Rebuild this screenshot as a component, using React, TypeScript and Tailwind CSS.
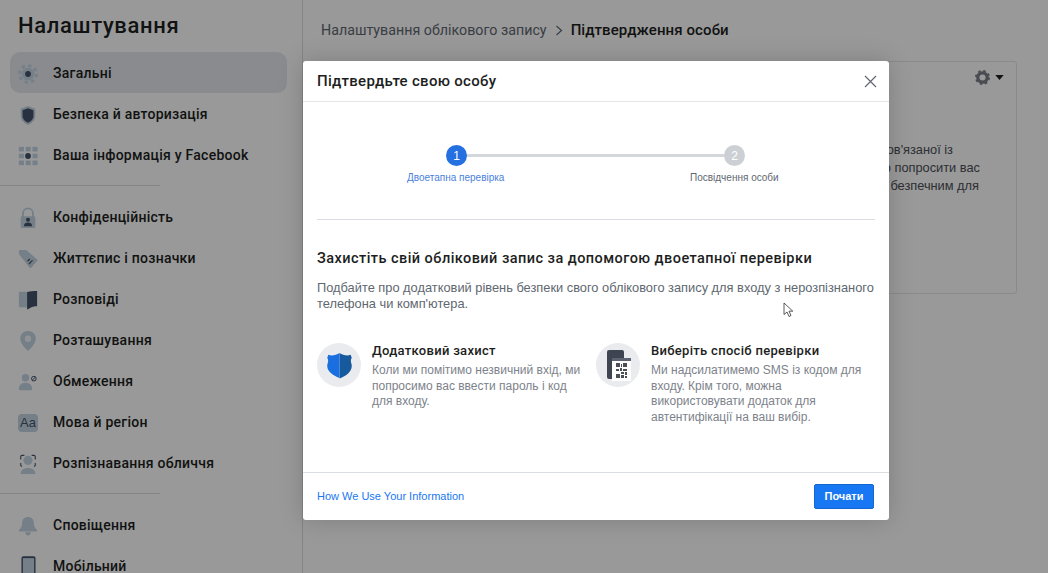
import React from "react";

const light = "#c3d4e2";
const dark = "#44536a";

const GearIcon = () => (
  <svg width="20" height="20" viewBox="0 0 22 22">
    <circle cx="11" cy="11" r="9.200" fill="none" stroke={light} strokeWidth="3.200" strokeDasharray="3.600 3.620" />
    <circle cx="11" cy="11" r="7" fill={light} />
    <circle cx="11" cy="11" r="3.200" fill={dark} />
  </svg>
);
const ShieldIcon = () => (
  <svg width="20" height="20" viewBox="0 0 22 22">
    <path d="M11 1l8 3v8c0 5-4 8-8 10-4-2-8-5-8-10V4z" fill={light} />
    <path d="M11 3.5l6 2.2V12c0 3.6-3 6-6 7.6C8 18 5 15.600 5 12V5.700z" fill={dark} />
  </svg>
);
const GridIcon = () => (
  <svg width="20" height="20" viewBox="0 0 22 22" fill={light}>
    <rect x="1" y="1" width="5.500" height="5" />
    <rect x="8.500" y="1" width="5.500" height="5" />
    <rect x="16" y="1" width="5.500" height="5" />
    <rect x="1" y="8.500" width="5.500" height="5" />
    <rect x="16" y="8.500" width="5.500" height="5" />
    <rect x="1" y="16" width="5.500" height="5" />
    <rect x="8.500" y="16" width="5.500" height="5" />
    <rect x="16" y="16" width="5.500" height="5" />
    <circle cx="11" cy="11" r="3.200" fill={dark} />
  </svg>
);
const LockIcon = () => (
  <svg width="20" height="22" viewBox="0 0 22 24">
    <path d="M5.500 12V7a5.500 5.500 0 0111 0v5" fill="none" stroke={light} strokeWidth="2" />
    <rect x="3" y="10" width="16" height="13" rx="1.500" fill={light} />
    <circle cx="11" cy="14" r="2.200" fill={dark} />
    <path d="M6.500 21c0-3 2-4 4.500-4s4.500 1 4.500 4z" fill={dark} />
  </svg>
);
const TagIcon = () => (
  <svg width="20" height="20" viewBox="0 0 22 22">
    <path d="M1 5.500V2.500C1 1.600 1.700 1 2.500 1H9l12 10.500c.5.500.5 1.100 0 1.700l-6.500 7.300c-.5.500-1.200.6-1.700.1z" fill={light} />
    <path d="M10.500 13.500l2.500-2.500M12 16.500l4-4" stroke={dark} strokeWidth="1.300" />
  </svg>
);
const BookIcon = () => (
  <svg width="20" height="20" viewBox="0 0 22 22">
    <path d="M1 2h10v17H1z" fill={light} />
    <path d="M10 2.500C13 1 17 1 21 1v17c-3 0-6 .5-8 2l-3 1.500z" fill={dark} />
  </svg>
);
const PinIcon = () => (
  <svg width="20" height="22" viewBox="0 0 22 24">
    <path d="M11 1c5 0 8.500 3.500 8.500 8.500 0 5-5 10-8.500 13.500-3.500-3.500-8.500-8.500-8.500-13.500C2.500 4.500 6 1 11 1z" fill={light} />
    <circle cx="11" cy="9.500" r="3.500" fill="#f0f5f9" />
  </svg>
);
const BlockedIcon = () => (
  <svg width="22" height="20" viewBox="0 0 24 22">
    <circle cx="9" cy="6" r="4.500" fill={light} />
    <path d="M1 20c0-5 3-8 8-8s8 3 8 8c0 .6-.4 1-1 1H2c-.6 0-1-.4-1-1z" fill={light} />
    <circle cx="19" cy="7" r="2.800" fill="none" stroke={dark} strokeWidth="1.200" />
    <path d="M17 9l4-4" stroke={dark} strokeWidth="1.200" />
  </svg>
);
const LangIcon = () => (
  <div className="w-[20px] h-[18px] shrink-0 rounded-[4px] bg-[#c3d4e2] flex items-center justify-center text-[13px] text-[#44536a] font-['Liberation_Sans',sans-serif]">
    Aa
  </div>
);
const FaceIcon = () => (
  <svg width="20" height="22" viewBox="0 0 22 24">
    <path d="M3 7V4c0-1 .5-1.500 1.500-1.500H7M15 2.500h2.500C18.500 2.500 19 3 19 4v3M3 11v2c0 1 .5 1.500 1.500 1.500M19 11v2c0 1-.5 1.500-1.500 1.500" fill="none" stroke={dark} strokeWidth="1.200" />
    <circle cx="11" cy="8" r="5" fill={light} />
    <path d="M3 23c0-4 3-6.500 8-6.500s8 2.500 8 6.500z" fill={light} />
  </svg>
);
const BellIcon = () => (
  <svg width="20" height="20" viewBox="0 0 22 22">
    <path d="M11 1c4 0 6.500 3 6.500 7 0 4 1.500 5.500 3.500 7.500.5.800 0 1.500-1 1.500H2c-1 0-1.500-.7-1-1.500 2-2 3.500-3.500 3.500-7.500 0-4 2.500-7 6.500-7z" fill={light} />
    <path d="M8 18h6c0 2-1.300 3.500-3 3.500S8 20 8 18z" fill={light} />
  </svg>
);
const PhoneIcon = () => (
  <svg width="15" height="24" viewBox="0 0 16 24">
    <rect x="0.500" y="0.500" width="15" height="23" rx="2" fill={dark} />
    <rect x="2" y="2.500" width="12" height="18" fill={light} />
  </svg>
);

const groups = [
  [
    { label: "Загальні", icon: <GearIcon />, active: true },
    { label: "Безпека й авторизація", icon: <ShieldIcon /> },
    { label: "Ваша інформація у Facebook", icon: <GridIcon /> },
  ],
  [
    { label: "Конфіденційність", icon: <LockIcon /> },
    { label: "Життєпис і позначки", icon: <TagIcon /> },
    { label: "Розповіді", icon: <BookIcon /> },
    { label: "Розташування", icon: <PinIcon /> },
    { label: "Обмеження", icon: <BlockedIcon /> },
    { label: "Мова й регіон", icon: <LangIcon /> },
    { label: "Розпізнавання обличчя", icon: <FaceIcon /> },
  ],
  [
    { label: "Сповіщення", icon: <BellIcon /> },
    { label: "Мобільний", icon: <PhoneIcon /> },
  ],
];

const Sidebar = () => (
  <aside className="w-[303px] shrink-0 h-full border-r border-[#dcdcdc] bg-white overflow-hidden">
    <h1 className="pl-[18px] pt-[12px] h-[52px] text-[22px] leading-[28px] font-medium tracking-[0.65px] text-[#1c1e21] font-['Roboto',sans-serif]">
      Налаштування
    </h1>
    {groups.map((group, i) => (
      <div key={i}>
        {i > 0 && <div className="w-[160px] h-px bg-[#dadde1] mt-[10px] mb-[10px]" />}
        {group.map((item) => (
          <div
            key={item.label}
            className={`ml-[10px] mr-[15px] h-[41px] pt-[2px] rounded-[10px] flex items-center ${item.active ? "bg-[#e4e8ee]" : ""}`}
          >
            <div className="ml-[8px] w-[20px] flex items-center justify-center shrink-0">{item.icon}</div>
            <span className="ml-[15px] text-[14px] font-medium tracking-[0.25px] text-[#1c1e21] font-['Roboto',sans-serif]">{item.label}</span>
          </div>
        ))}
      </div>
    ))}
  </aside>
);

const Background = () => (
  <main className="flex-1 h-full bg-white pl-[18px] pr-[31px]">
    <div className="h-[61px] pt-[20px] flex items-start text-[15px] leading-[20px] font-['Roboto',sans-serif]">
      <span className="text-[#606770] text-[14.250px]">Налаштування облікового запису</span>
      <svg className="mx-[8px] mt-[5px]" width="8" height="11" viewBox="0 0 8 11">
        <path d="M1.500 1l5 4.500-5 4.500" fill="none" stroke="#606770" strokeWidth="1.200" />
      </svg>
      <span className="font-medium tracking-[0.1px] text-[#1c1e21]">Підтвердження особи</span>
    </div>
    <div className="h-[233px] rounded-[3px] border border-[#e6e6e6] flex flex-col items-end text-[12.800px] leading-[18px] text-[#4b4f56]">
      <div className="h-[28px] flex items-center mr-[12px] gap-[5px] mt-[1px]">
        <svg width="15" height="15" viewBox="0 0 16 16">
          <circle cx="8" cy="8" r="5" fill="none" stroke="#7a8088" strokeWidth="3.500" />
          <circle cx="8" cy="8" r="6.800" fill="none" stroke="#7a8088" strokeWidth="2.400" strokeDasharray="2.600 2.740" />
        </svg>
        <svg width="9" height="5" viewBox="0 0 10 6">
          <path d="M0 0h10L5 6z" fill="#1c1e21" />
        </svg>
      </div>
      <div className="mt-[50px] mr-[63px]">пов'язаної із</div>
      <div className="mr-[36px]">можемо попросити вас</div>
      <div className="mr-[37px]">безпечним для</div>
    </div>
  </main>
);

const ShieldBadge = () => (
  <div className="w-[44px] h-[44px] rounded-full bg-[#e9ebee] flex items-center justify-center shrink-0">
    <svg width="29" height="27" viewBox="0 0 26 26" preserveAspectRatio="none">
      <path d="M13 1c2 1.500 4.500 2.300 7 2.300 1 0 2-.2 3-.6l1 3c-.8 1-.8 2-.8 3.300 0 1 .8 2.500.8 4.500 0 5.500-5 9.500-11 12z" fill="#17599d" />
      <path d="M13 1C11 2.500 8.500 3.300 6 3.300c-1 0-2-.2-3-.6l-1 3c.8 1 .8 2 .8 3.300 0 1-.8 2.500-.8 4.500C2 18.500 7 22.500 13 25z" fill="#1a6fe0" />
    </svg>
  </div>
);

const PhoneBadge = () => (
  <div className="w-[44px] h-[44px] rounded-full bg-[#e9ebee] flex items-center justify-center shrink-0">
    <svg width="26" height="32" viewBox="0 0 26 32">
      <rect x="2" y="1" width="17" height="29" rx="2" fill="#3e4550" />
      <rect x="7" y="9" width="19" height="23" fill="#ffffff" />
      <rect x="7" y="9" width="19" height="3" fill="#5b6470" />
      <g fill="#4b4f56">
        <rect x="11" y="14" width="4" height="4" />
        <rect x="18" y="14" width="4" height="4" />
        <rect x="11" y="25" width="4" height="4" />
        <rect x="16" y="15" width="1" height="3" />
        <rect x="11" y="20" width="3" height="2" />
        <rect x="15" y="19" width="2" height="3" />
        <rect x="18" y="20" width="4" height="2" />
        <rect x="16" y="23" width="3" height="2" />
        <rect x="20" y="23" width="2" height="3" />
        <rect x="16" y="26" width="3" height="3" />
        <rect x="20" y="27" width="2" height="2" />
      </g>
    </svg>
  </div>
);

const Feature = ({ badge, title, lines, className }: { badge: React.ReactNode; title: string; lines: string[]; className: string }) => (
  <div className={`flex gap-[11px] ${className}`}>
    {badge}
    <div>
      <div className="text-[13px] leading-[16px] font-medium tracking-[0.3px] text-[#1c1e21] font-['Roboto',sans-serif]">{title}</div>
      <div className="mt-[4px] text-[12px] leading-[15.500px] text-[#7d828b] whitespace-nowrap">
        {lines.map((l) => (
          <div key={l}>{l}</div>
        ))}
      </div>
    </div>
  </div>
);

const Modal = () => (
  <div className="absolute left-[303px] top-[61px] w-[586px] h-[459px] bg-white rounded-[3px] flex flex-col shadow-[0_0_24px_rgba(0,0,0,0.18)]">
    <div className="h-[41px] shrink-0 border-b border-[#e5e5e5] flex items-center justify-between pl-[14px] pr-[12px]">
      <span className="text-[15px] font-medium tracking-[0.3px] text-[#1c1e21] font-['Roboto',sans-serif]">Підтвердьте свою особу</span>
      <svg width="13" height="13" viewBox="0 0 13 13">
        <path d="M1 1l11 11M12 1L1 12" stroke="#606770" strokeWidth="1.200" />
      </svg>
    </div>

    <div className="flex-1 px-[14px]">
      <div className="h-[118px] border-b border-[#dadde1] pt-[43px]">
        <div className="relative h-[40px] text-[10px] leading-[14px]">
          <div className="absolute left-[139px] right-[139px] top-[9px] h-[3px] bg-[#d3d6db]" />
          <div className="absolute left-[129px] top-0 w-[21px] h-[21px] rounded-full bg-[#2470e0] flex items-center justify-center text-white text-[12px]">1</div>
          <div className="absolute left-[407px] top-0 w-[21px] h-[21px] rounded-full bg-[#ccd0d5] flex items-center justify-center text-white text-[12px]">2</div>
          <div className="absolute left-[90px] top-[26px] text-[#4a7fdd] whitespace-nowrap">Двоетапна перевірка</div>
          <div className="absolute left-[373px] top-[26px] text-[#606770] whitespace-nowrap">Посвідчення особи</div>
        </div>
      </div>

      <h2 className="mt-[29px] text-[14.500px] leading-[20px] font-medium tracking-[0.45px] text-[#1c1e21] whitespace-nowrap font-['Roboto',sans-serif]">
        Захистіть свій обліковий запис за допомогою двоетапної перевірки
      </h2>
      <p className="mt-[11px] text-[12.840px] leading-[16px] text-[#606770] whitespace-nowrap">
        Подбайте про додатковий рівень безпеки свого облікового запису для входу з нерозпізнаного
        <br />
        телефона чи комп'ютера.
      </p>

      <div className="mt-[31px] flex">
        <Feature
          className="w-[279px]"
          badge={<ShieldBadge />}
          title="Додатковий захист"
          lines={["Коли ми помітимо незвичний вхід, ми", "попросимо вас ввести пароль і код", "для входу."]}
        />
        <Feature
          className=""
          badge={<PhoneBadge />}
          title="Виберіть спосіб перевірки"
          lines={["Ми надсилатимемо SMS із кодом для", "входу. Крім того, можна", "використовувати додаток для", "автентифікації на ваш вибір."]}
        />
      </div>
    </div>

    <div className="h-[48px] shrink-0 border-t border-[#dadde1] flex items-center justify-between pl-[14px] pr-[15px]">
      <span className="text-[11px] text-[#1877f2]">How We Use Your Information</span>
      <button className="w-[60px] h-[25px] bg-[#1877f2] rounded-[2px] border border-[#1466d0] text-white text-[11px] font-bold">Почати</button>
    </div>
  </div>
);

export default function App() {
  return (
    <div className="relative w-[1048px] h-[573px] overflow-hidden flex font-['Liberation_Sans',Arial,sans-serif]">
      <Sidebar />
      <Background />
      <div className="absolute inset-0 bg-black/40" />
      <Modal />
      <svg className="absolute left-[783px] top-[302px]" width="11" height="16" viewBox="0 0 11 16">
        <path d="M1 1v11.500l3-2.500 2 4.500 2-1-2-4.300h3.800z" fill="#fff" stroke="#333" strokeWidth="0.800" />
      </svg>
    </div>
  );
}
